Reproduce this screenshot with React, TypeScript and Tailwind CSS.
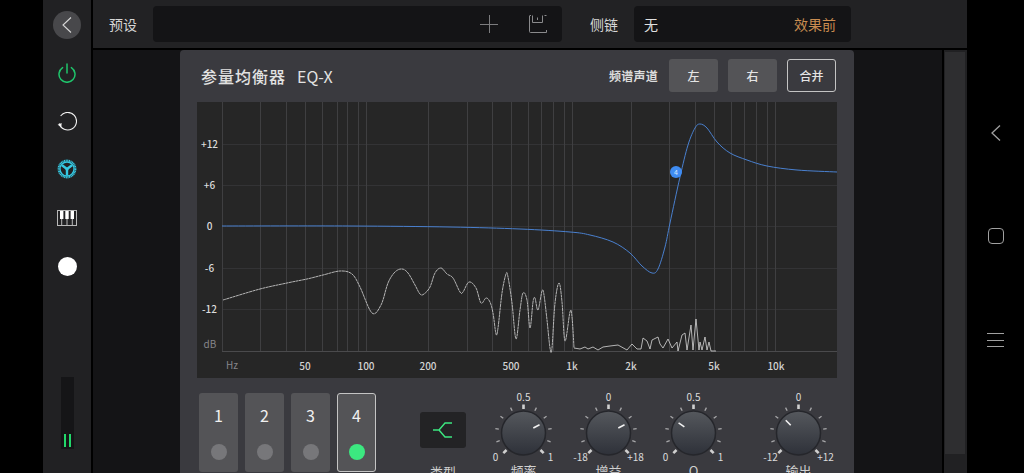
import React from 'react'

// grid columns as they sit on the log frequency scale, 20Hz to 10k
const gridXs = [222, 260, 286, 305, 322, 337, 347, 358, 366, 428, 467, 492, 511, 528, 541, 553, 564, 572, 631, 669, 695, 714, 731, 744, 756, 767, 775]

const gainLabels = [
    { text: '+12', y: 144 },
    { text: '+6', y: 185 },
    { text: '0', y: 226 },
    { text: '-6', y: 268 },
    { text: '-12', y: 309 },
]
const hzLabels = [
    { text: '50', x: 305 },
    { text: '100', x: 366 },
    { text: '200', x: 428 },
    { text: '500', x: 511 },
    { text: '1k', x: 572 },
    { text: '2k', x: 631 },
    { text: '5k', x: 714 },
    { text: '10k', x: 776 },
]

type Pt = [number, number]

const bluePts: Pt[] = [
    [222, 226], [350, 226], [450, 227], [520, 229], [570, 232], [590, 235], [613, 242], [630, 253], [642, 266],
    [652, 273], [658, 269], [665, 247], [670, 223], [680, 177], [688, 145], [695, 128], [700, 124], [707, 128],
    [717, 142], [730, 153], [747, 160], [767, 166], [797, 170], [837, 172],
]

const whitePts: Pt[] = [
    [223, 300], [260, 289], [287, 283], [307, 279], [323, 275], [340, 271], [352, 274], [360, 287], [372, 313],
    [381, 305], [388, 283], [395, 272], [402, 269], [408, 273], [415, 285], [420, 294], [424, 294], [430, 287],
    [435, 273], [441, 268], [447, 274], [453, 278], [460, 292], [463, 292], [469, 282], [476, 288], [481, 303],
    [486, 298], [490, 302], [493, 313], [496, 334], [498, 328], [502, 293], [506, 274], [508, 277], [512, 303],
    [516, 339], [520, 310], [523, 293], [527, 300], [530, 328], [533, 302], [535, 298], [538, 310], [542, 291],
    [544, 295], [547, 320], [550, 348], [552, 348], [555, 303], [559, 283], [562, 302], [565, 341], [570, 312],
    [572, 317], [574, 348],
]

const noisePts: Pt[] = [
    [574, 348], [580, 349], [585, 347], [588, 349], [593, 347], [598, 350], [603, 347], [610, 346], [618, 345],
    [627, 350], [632, 344], [637, 349], [641, 349], [643, 338], [647, 341], [650, 349], [652, 340], [658, 337],
    [660, 344], [663, 348], [668, 339], [672, 348], [677, 342], [678, 351], [682, 335], [685, 333], [687, 350],
    [691, 325], [693, 350], [696, 319], [699, 350], [700, 342], [702, 350], [705, 337], [707, 350], [709, 342],
    [711, 351], [716, 351],
]

// catmull-rom through the sampled points
const smooth = (pts: Pt[]) => {
    let d = `M${pts[0][0]} ${pts[0][1]}`
    for (let i = 0; i < pts.length - 1; i++) {
        const p0 = pts[Math.max(i - 1, 0)]
        const p1 = pts[i]
        const p2 = pts[i + 1]
        const p3 = pts[Math.min(i + 2, pts.length - 1)]
        const c1x = p1[0] + (p2[0] - p0[0]) / 6
        const c1y = p1[1] + (p2[1] - p0[1]) / 6
        const c2x = p2[0] - (p3[0] - p1[0]) / 6
        const c2y = p2[1] - (p3[1] - p1[1]) / 6
        d += ` C${c1x.toFixed(1)} ${c1y.toFixed(1)} ${c2x.toFixed(1)} ${c2y.toFixed(1)} ${p2[0]} ${p2[1]}`
    }
    return d
}
const straight = (pts: Pt[]) => 'M' + pts.map(p => p.join(' ')).join(' L')

const EqGraph = () => (
    <svg width="640" height="276" viewBox="197 102 640 276" className="block bg-[#262626]">
        {gainLabels.map(l => (
            <line key={l.text} x1="222" x2="837" y1={l.y + 0.5} y2={l.y + 0.5} stroke="#333335" strokeWidth="1" />
        ))}
        {gridXs.map(x => (
            <line key={x} x1={x + 0.5} x2={x + 0.5} y1="102" y2="351" stroke="#3f3f41" strokeWidth="1" />
        ))}
        <line x1="222" x2="837" y1="351.5" y2="351.5" stroke="#4a4a4c" strokeWidth="1" />

        <path d={smooth(whitePts)} fill="none" stroke="#d8d8d8" strokeWidth="0.8" strokeDasharray="3 0.4" />
        <path d={straight(noisePts)} fill="none" stroke="#d8d8d8" strokeWidth="0.8" />
        <path d={smooth(bluePts)} fill="none" stroke="#4a80cf" strokeWidth="1" />

        <circle cx="676" cy="172" r="6" fill="#3f8cf2" />
        <text x="676" y="175" textAnchor="middle" fontSize="7" fill="#d5e6ff">4</text>

        {gainLabels.map(l => (
            <text key={l.text} x="209.5" y={l.y + 3.5} textAnchor="middle" fontSize="10" fontWeight="500" fill="#dcdcdc">{l.text}</text>
        ))}
        <text x="210" y="348" textAnchor="middle" fontSize="10" fill="#85858a">dB</text>
        <text x="232" y="369" textAnchor="middle" fontSize="10" fill="#85858a">Hz</text>
        {hzLabels.map(l => (
            <text key={l.text} x={l.x} y="369.5" textAnchor="middle" fontSize="10" fontWeight="500" fill="#d4d4d4">{l.text}</text>
        ))}
    </svg>
)

interface KnobProps {
    angle: number;
    top: string;
    min: string;
    max: string;
    label: string;
    id: string;
}

const Knob = ({ angle, top, min, max, label, id }: KnobProps) => {
    const ticks = Array.from({ length: 11 }, (_, i) => -135 + i * 27)
    return (
        <div className="w-[85px] flex flex-col items-center">
            <svg width="85" height="74" viewBox="-42.5 -45 85 74" className="block">
                <defs>
                    <linearGradient id={id} x1="0" x2="0" y1="0" y2="1">
                        <stop offset="0" stopColor="#55585d" />
                        <stop offset="1" stopColor="#2e3139" />
                    </linearGradient>
                </defs>
                {ticks.map((t, i) => {
                    const major = i === 0 || i === 5 || i === 10
                    return (
                        <line
                            key={t}
                            x1="0"
                            x2="0"
                            y1={major ? -24 : -25}
                            y2="-28.5"
                            transform={`rotate(${t})`}
                            stroke={major ? '#d0d0d0' : '#a8a8aa'}
                            strokeWidth={major ? 2.6 : 1.3}
                        />
                    )
                })}
                <circle r="22" fill={`url(#${id})`} stroke="#25262b" strokeWidth="1.5" />
                <line x1="0" x2="0" y1="-11" y2="-18" transform={`rotate(${angle})`} stroke="#f2f2f2" strokeWidth="1.6" />
                <text x="0" y="-32" textAnchor="middle" fontSize="10" fill="#dcdcdc">{top}</text>
                <text x="-28" y="27.5" textAnchor="middle" fontSize="10" fill="#dcdcdc">{min}</text>
                <text x="27" y="27.5" textAnchor="middle" fontSize="10" fill="#dcdcdc">{max}</text>
            </svg>
            <div className="text-[13px] leading-[18px] text-[#d0d0d0]">{label}</div>
        </div>
    )
}

const BandButton = ({ n, active }: { n: number; active?: boolean }) => (
    <div className={`w-[39px] h-[79px] shrink-0 rounded-[3px] bg-[#545457] border flex flex-col items-center pt-[9px] ${active ? 'border-[#c4c4c4]' : 'border-transparent'}`}>
        <div className="text-[16px] leading-[24px] text-[#f0f0f0]">{n}</div>
        <div className={`mt-[17px] w-4 h-4 rounded-full ${active ? 'bg-[#3ce880]' : 'bg-[#77777a]'}`} />
    </div>
)

const Sidebar = () => (
    <div className="w-[50px] shrink-0 h-full bg-[#212123] border-r-2 border-black flex flex-col items-center pt-px">
        <div className="h-12 flex items-center justify-center">
            <div className="w-7 h-7 rounded-full bg-[#48484b] flex items-center justify-center">
                <svg width="12" height="18" viewBox="0 0 12 18" fill="none" stroke="#d8d8d8" strokeWidth="1.1">
                    <path d="M10 1.5 2 9l8 7.5" />
                </svg>
            </div>
        </div>
        <div className="h-12 flex items-center justify-center">
            <svg width="20" height="20" viewBox="0 0 20 20" fill="none" stroke="#1fc46b" strokeWidth="1.5" strokeLinecap="round">
                <path d="M5.6 4.6a8 8 0 1 0 8.8 0" />
                <path d="M10 1v9" />
            </svg>
        </div>
        <div className="h-12 flex items-center justify-center">
            <svg width="20" height="20" viewBox="0 0 20 20" fill="none" stroke="#f2f2f2" strokeWidth="1.1" className="translate-y-px">
                <path d="M2.2 11.5A8.8 8.8 0 1 0 3.6 4" />
                <path d="M0.6 12.8 4.6 11 4.4 15z" fill="#f2f2f2" stroke="none" />
            </svg>
        </div>
        <div className="h-12 flex items-center justify-center">
            <svg width="20" height="20" viewBox="0 0 20 20" fill="none" stroke="#35c8e2">
                <circle cx="10" cy="10" r="8.4" strokeWidth="2" strokeDasharray="1.1 0.55" />
                <circle cx="10" cy="10" r="7" strokeWidth="1.3" />
                <path d="M10 10 5 6.2M10 10l5-3.8M10 10v6.4" strokeWidth="2.4" />
                <circle cx="10" cy="10" r="1.6" fill="#35c8e2" stroke="none" />
            </svg>
        </div>
        <div className="h-12 flex items-center justify-center">
            <svg width="20" height="16" viewBox="0 0 20 16" fill="none" className="translate-y-px">
                <rect x="0.5" y="0.5" width="19" height="15" stroke="#b8b8b8" strokeWidth="1" fill="#212123" />
                <path d="M4.7 8v7M10 8v7M15.3 8v7" stroke="#b8b8b8" strokeWidth="1" />
                <rect x="3" y="1" width="3.4" height="8" fill="#fff" />
                <rect x="8.3" y="1" width="3.4" height="8" fill="#fff" />
                <rect x="13.6" y="1" width="3.4" height="8" fill="#fff" />
            </svg>
        </div>
        <div className="h-12 flex items-center justify-center">
            <div className="w-[19px] h-[19px] rounded-full bg-white translate-y-px" />
        </div>
        <div className="mt-auto mb-6 w-[13px] h-[72px] bg-[#151517] flex items-end justify-center gap-[3px] pb-[2px]">
            <div className="w-[2px] h-[13px] bg-[#22d86a]" />
            <div className="w-[2px] h-[13px] bg-[#22d86a]" />
        </div>
    </div>
)

const TopBar = () => (
    <div className="h-[50px] shrink-0 bg-[#222224] border-b-2 border-black flex items-center text-[14px]">
        <div className="w-[60px] pl-4 text-[#d6d6d6]">预设</div>
        <div className="w-[409px] h-9 rounded-sm bg-[#141416] flex items-center justify-end">
            <svg width="18" height="18" viewBox="0 0 18 18" stroke="#7c7c7e" strokeWidth="1" className="mr-[31px]">
                <path d="M9.5 0v18M0 9.5h18" />
            </svg>
            <svg width="18" height="18" viewBox="0 0 18 18" fill="none" stroke="#8a8a8c" strokeWidth="1" className="mr-[15px]">
                <path d="M17.5 15v2.5H1.5a1 1 0 0 1-1-1V1M3.5 .5v7h10v-7M8.5 2.5v2.5M.5 .5h1.5M15.5 .5h2" />
            </svg>
        </div>
        <div className="w-[72px] pl-7 text-[#d6d6d6] whitespace-nowrap">侧链</div>
        <div className="w-[217px] h-9 rounded-sm bg-[#141416] flex items-center justify-between pl-[10px] pr-[15px]">
            <span className="text-[#e0e0e0]">无</span>
            <span className="text-[#c98c50]">效果前</span>
        </div>
    </div>
)

const ChannelButton = ({ text, active }: { text: string; active?: boolean }) => (
    <div className={`w-[49px] h-[33px] rounded-[3px] flex items-center justify-center text-[12px] font-medium text-[#e4e4e4] ${active ? 'border border-[#c4c4c4]' : 'bg-[#545457]'}`}>
        {text}
    </div>
)

const EqPanel = () => (
    <div className="ml-[87px] w-[674px] h-full shrink-0 bg-[#3a3a3f] rounded-t-[4px] overflow-hidden pl-[17px]">
        <div className="h-[52px] w-[640px] flex items-center pb-[1px]">
            <span className="ml-1 text-[16px] font-medium tracking-[1px] text-[#e2e2e2]">参量均衡器</span>
            <span className="ml-[11px] text-[16px] text-[#e2e2e2]">EQ-X</span>
            <span className="ml-auto mr-[11px] text-[12px] tracking-[0.25px] font-bold text-[#dcdcdc]">频谱声道</span>
            <div className="flex gap-[10px]">
                <ChannelButton text="左" />
                <ChannelButton text="右" />
                <ChannelButton text="合并" active />
            </div>
            <div className="w-px" />
        </div>
        <EqGraph />
        <div className="flex mt-[15px] ml-[2px]">
            <div className="flex gap-[7px]">
                <BandButton n={1} />
                <BandButton n={2} />
                <BandButton n={3} />
                <BandButton n={4} active />
            </div>
            <div className="ml-11 w-[46px] flex flex-col items-center pt-[19px]">
                <div className="w-[46px] h-9 rounded-[3px] bg-[#232325] flex items-center justify-center">
                    <svg width="22" height="18" viewBox="0 0 22 18" fill="none" stroke="#3ce880" strokeWidth="1.4">
                        <path d="M1 9h6l6-7h7M7 9l6 7h7" />
                    </svg>
                </div>
                <div className="mt-[15px] text-[13px] leading-[18px] text-[#d0d0d0] whitespace-nowrap">类型</div>
            </div>
            <div className="ml-[15px] mt-[-5px] flex">
                <Knob id="knob-freq" angle={63} top="0.5" min="0" max="1" label="频率" />
                <Knob id="knob-gain" angle={63} top="0" min="-18" max="+18" label="增益" />
                <Knob id="knob-q" angle={-56} top="0.5" min="0" max="1" label="Q" />
                <div className="ml-5">
                    <Knob id="knob-out" angle={-45} top="0" min="-12" max="+12" label="输出" />
                </div>
            </div>
        </div>
    </div>
)

const NavBar = () => (
    <div className="w-[57px] shrink-0 h-full bg-black flex flex-col items-center pt-[124px]">
        <svg width="12" height="18" viewBox="0 0 12 18" fill="none" stroke="#a0a0a0" strokeWidth="1.3">
            <path d="M10 1.5 2 9l8 7.5" />
        </svg>
        <div className="mt-[86px] w-[16px] h-[16px] rounded-[4px] border border-[#a0a0a0]" />
        <div className="mt-[89px] w-[17px] h-[14px] flex flex-col justify-between">
            <div className="h-px bg-[#a0a0a0]" />
            <div className="h-px bg-[#a0a0a0]" />
            <div className="h-px bg-[#a0a0a0]" />
        </div>
    </div>
)

const App = () => {
    return (
        <div className="w-[1024px] h-[473px] flex overflow-hidden bg-black font-['Noto_Sans_CJK_SC','Noto_Sans',sans-serif]">
            <div className="w-[43px] shrink-0" />
            <Sidebar />
            <div className="flex-1 min-w-0 flex flex-col">
                <TopBar />
                <div className="flex-1 min-h-0 flex bg-[#141416]">
                    <EqPanel />
                    <div className="ml-[88px] w-[25px] h-full shrink-0 border-l-2 border-black bg-[#212123] pl-px pr-[2px] pt-[2px] pb-[19px]">
                        <div className="w-full h-full bg-[#2e2e30]" />
                    </div>
                </div>
            </div>
            <NavBar />
        </div>
    )
}

export default App
